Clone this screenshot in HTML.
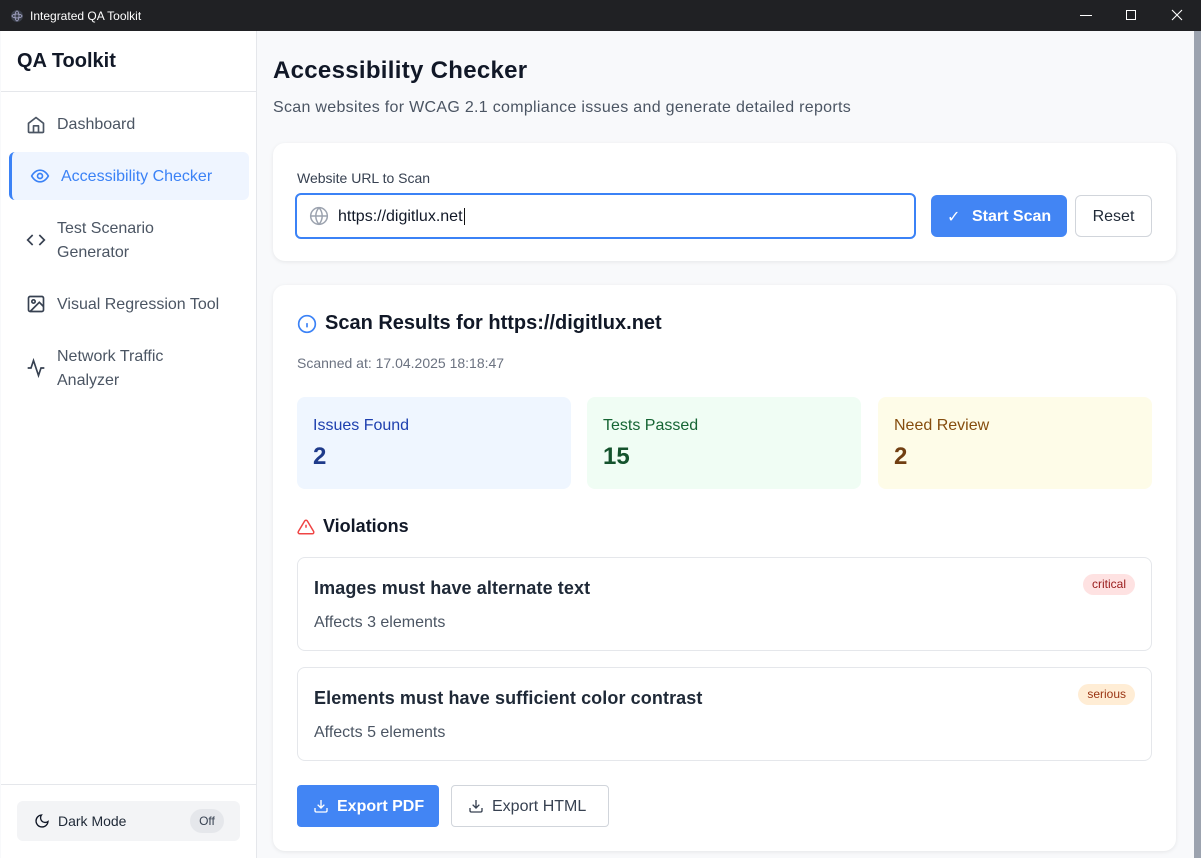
<!DOCTYPE html>
<html><head><style>
*{box-sizing:border-box;margin:0;padding:0}
body{width:1201px;height:858px;overflow:hidden;font-family:"Liberation Sans",sans-serif;background:#f8f9fb;position:relative;color:#111827}
.tb{position:absolute;left:0;top:0;width:1201px;height:31px;background:#202124;color:#fff;font-size:12px}
.side{position:absolute;left:1px;top:31px;width:256px;height:827px;background:#fff;border-right:1px solid #e5e7eb}
.a{position:absolute}
.nav{position:absolute;left:8px;width:240px;font-size:16px;color:#4b5563;line-height:24px}
.nav svg{position:absolute;left:17px}
.card{position:absolute;background:#fff;border-radius:12px;box-shadow:0 1px 4px rgba(0,0,0,.08)}
.stat{position:absolute;top:397px;height:92px;width:274px;border-radius:8px}
.stat .l{position:absolute;left:16px;top:20px;font-size:16px}
.stat .n{position:absolute;left:16px;top:46px;font-size:24px;font-weight:bold}
.vc{position:absolute;left:297px;width:855px;height:94px;border:1px solid #e5e7eb;border-radius:8px;background:#fff}
.vc .t{position:absolute;left:16px;top:20px;font-size:18px;font-weight:bold;color:#1f2937;letter-spacing:.1px}
.vc .s{position:absolute;left:16px;top:56px;font-size:16px;color:#4b5563}
.badge{position:absolute;top:16px;right:16px;height:21px;border-radius:11px;font-size:12px;padding:3px 9px}
</style></head><body>
<div class="tb">
<svg class="a" style="left:10px;top:9px" width="14" height="14" viewBox="0 0 14 14"><circle cx="7" cy="7" r="6" fill="#3a3f4a"/><ellipse cx="7" cy="7" rx="5" ry="2" fill="none" stroke="#aac" stroke-width=".8"/><ellipse cx="7" cy="7" rx="2" ry="5" fill="none" stroke="#aac" stroke-width=".8"/></svg>
<span class="a" style="left:30px;top:9px">Integrated QA Toolkit</span>
<div class="a" style="left:1080px;top:15px;width:12px;height:1px;background:#fff"></div>
<div class="a" style="left:1126px;top:10px;width:10px;height:10px;border:1px solid #fff"></div>
<svg class="a" style="left:1171px;top:9px" width="12" height="12"><path d="M1 1L11 11M11 1L1 11" stroke="#fff" stroke-width="1.1"/></svg>
</div>
<div class="a" style="left:1194px;top:31px;width:7px;height:827px;background:#9ca3af"></div>
<div class="side">
<div class="a" style="left:16px;top:19px;font-size:20px;font-weight:bold">QA Toolkit</div>
<div class="a" style="left:0;top:60px;width:255px;height:1px;background:#e5e7eb"></div>
<div class="nav" style="top:82px;height:24px"><svg width="20" height="20" viewBox="0 0 24 24" fill="none" stroke="#4b5563" stroke-width="2" stroke-linejoin="round" style="top:2px"><path d="M3 10l9-7 9 7v10a1 1 0 0 1-1 1H4a1 1 0 0 1-1-1z"/><path d="M9 21v-8h6v8"/></svg><span class="a" style="left:48px">Dashboard</span></div>
<div class="nav" style="top:121px;height:48px;background:#eff5ff;border-radius:6px;border-left:3px solid #3b82f6;color:#3b82f6"><svg width="20" height="20" viewBox="0 0 24 24" fill="none" stroke="#3b82f6" stroke-width="2" style="top:14px;left:18px"><path d="M2 12s3.5-7 10-7 10 7 10 7-3.5 7-10 7S2 12 2 12z"/><circle cx="12" cy="12" r="3"/></svg><span class="a" style="left:49px;top:13px">Accessibility Checker</span></div>
<div class="nav" style="top:186px;height:48px"><svg width="20" height="20" viewBox="0 0 24 24" fill="none" stroke="#374151" stroke-width="2" style="top:13px"><path d="M8 6l-6 6 6 6M16 6l6 6-6 6"/></svg><span class="a" style="left:48px">Test Scenario<br>Generator</span></div>
<div class="nav" style="top:262px;height:24px"><svg width="20" height="20" viewBox="0 0 24 24" fill="none" stroke="#374151" stroke-width="2" style="top:1px"><rect x="3" y="3" width="18" height="18" rx="2"/><circle cx="9" cy="9" r="2"/><path d="M21 15l-5-5L5 21"/></svg><span class="a" style="left:48px">Visual Regression Tool</span></div>
<div class="nav" style="top:314px;height:48px"><svg width="20" height="20" viewBox="0 0 24 24" fill="none" stroke="#374151" stroke-width="2" style="top:13px"><path d="M22 12h-4l-3 9L9 3l-3 9H2"/></svg><span class="a" style="left:48px">Network Traffic<br>Analyzer</span></div>
<div class="a" style="left:0;top:753px;width:255px;height:1px;background:#e5e7eb"></div>
<div class="a" style="left:16px;top:770px;width:223px;height:40px;background:#f3f4f6;border-radius:6px;font-size:14px">
<svg class="a" style="left:17px;top:12px" width="16" height="16" viewBox="0 0 24 24" fill="none" stroke="#111827" stroke-width="2"><path d="M21 12.8A9 9 0 1 1 11.2 3 7 7 0 0 0 21 12.8z"/></svg>
<span class="a" style="left:41px;top:12px;color:#1f2937">Dark Mode</span>
<span class="a" style="left:173px;top:8px;width:34px;height:24px;border-radius:12px;background:#e5e7eb;font-size:12px;text-align:center;line-height:24px;color:#374151">Off</span></div>
</div>

<div class="a" style="left:273px;top:57px;font-size:24px;font-weight:bold;letter-spacing:.3px">Accessibility Checker</div>
<div class="a" style="left:273px;top:99px;font-size:16px;color:#4b5563;letter-spacing:.3px">Scan websites for WCAG 2.1 compliance issues and generate detailed reports</div>

<div class="card" style="left:273px;top:143px;width:903px;height:118px">
<div class="a" style="left:24px;top:27px;font-size:14px;color:#374151">Website URL to Scan</div>
<div class="a" style="left:22px;top:50px;width:621px;height:46px;border:2px solid #3b82f6;border-radius:6px">
<svg class="a" style="left:12px;top:11px" width="20" height="20" viewBox="0 0 24 24" fill="none" stroke="#9ca3af" stroke-width="1.8"><circle cx="12" cy="12" r="10"/><path d="M2 12h20M12 2a15 15 0 0 1 0 20M12 2a15 15 0 0 0 0 20"/></svg>
<span class="a" style="left:41px;top:13px;font-size:16px;color:#111827">https://digitlux.net<span style="border-right:1px solid #111;margin-left:1px"></span></span></div>
<div class="a" style="left:658px;top:52px;width:136px;height:42px;background:#4285f4;border-radius:6px;color:#fff;font-size:16px;font-weight:bold"><span class="a" style="left:16px;top:12px;font-weight:normal">✓</span><span class="a" style="left:41px;top:13px">Start Scan</span></div>
<div class="a" style="left:802px;top:52px;width:77px;height:42px;border:1px solid #d1d5db;border-radius:6px;font-size:16px;color:#1f2937;text-align:center;line-height:42px">Reset</div>
</div>

<div class="card" style="left:273px;top:285px;width:903px;height:566px">
<svg class="a" style="left:24px;top:29px" width="20" height="20" viewBox="0 0 24 24" fill="none" stroke="#3b82f6" stroke-width="2"><circle cx="12" cy="12" r="10"/><path d="M12 16v-5M12 8h.01"/></svg>
<div class="a" style="left:52px;top:27px;font-size:20px;font-weight:bold">Scan Results for https://digitlux.net</div>
<div class="a" style="left:24px;top:70px;font-size:14px;color:#6b7280">Scanned at: 17.04.2025 18:18:47</div>
</div>
<div class="stat" style="left:297px;background:#eff6ff"><div class="l" style="color:#1e40af">Issues Found</div><div class="n" style="color:#1e3a8a">2</div></div>
<div class="stat" style="left:587px;background:#f0fdf4"><div class="l" style="color:#166534">Tests Passed</div><div class="n" style="color:#14532d">15</div></div>
<div class="stat" style="left:878px;background:#fefce8"><div class="l" style="color:#854d0e">Need Review</div><div class="n" style="color:#713f12">2</div></div>

<svg class="a" style="left:297px;top:518px" width="18" height="18" viewBox="0 0 24 24" fill="none" stroke="#ef4444" stroke-width="2"><path d="M10.3 3.9L1.8 18a2 2 0 0 0 1.7 3h17a2 2 0 0 0 1.7-3L13.7 3.9a2 2 0 0 0-3.4 0zM12 9v4M12 17h.01"/></svg>
<div class="a" style="left:323px;top:516px;font-size:18px;font-weight:bold">Violations</div>

<div class="vc" style="top:557px"><div class="t">Images must have alternate text</div><div class="s">Affects 3 elements</div><div class="badge" style="background:#fee2e2;color:#991b1b">critical</div></div>
<div class="vc" style="top:667px"><div class="t">Elements must have sufficient color contrast</div><div class="s">Affects 5 elements</div><div class="badge" style="background:#ffedd5;color:#9a3412">serious</div></div>

<div class="a" style="left:297px;top:785px;width:142px;height:42px;background:#4285f4;border-radius:4px;color:#fff;font-size:16px;font-weight:bold">
<svg class="a" style="left:16px;top:13px" width="16" height="16" viewBox="0 0 24 24" fill="none" stroke="#fff" stroke-width="2"><path d="M21 15v4a2 2 0 0 1-2 2H5a2 2 0 0 1-2-2v-4M7 10l5 5 5-5M12 15V3"/></svg><span class="a" style="left:40px;top:13px">Export PDF</span></div>
<div class="a" style="left:451px;top:785px;width:158px;height:42px;border:1px solid #d1d5db;border-radius:4px;color:#374151;font-size:16px">
<svg class="a" style="left:16px;top:12px" width="16" height="16" viewBox="0 0 24 24" fill="none" stroke="#374151" stroke-width="2"><path d="M21 15v4a2 2 0 0 1-2 2H5a2 2 0 0 1-2-2v-4M7 10l5 5 5-5M12 15V3"/></svg><span class="a" style="left:40px;top:12px">Export HTML</span></div>
</body></html>
